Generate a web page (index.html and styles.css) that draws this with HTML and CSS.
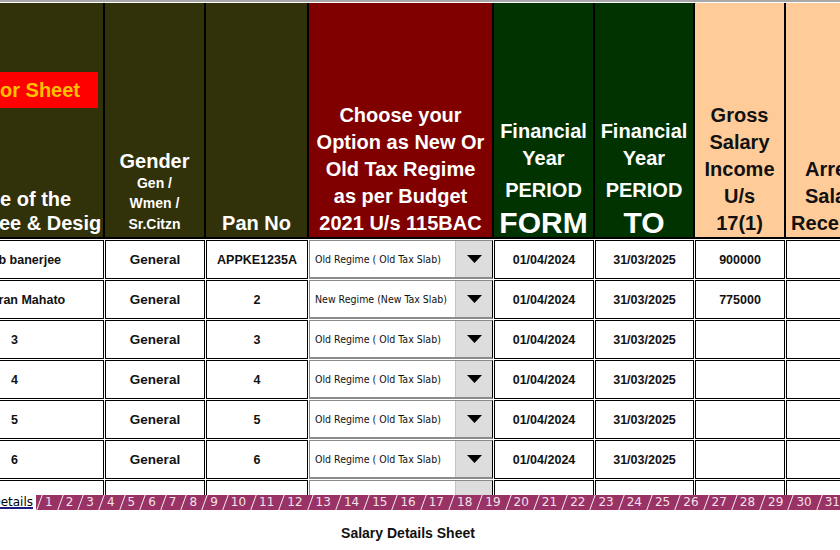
FILE: index.html
```html
<!DOCTYPE html>
<html>
<head>
<meta charset="utf-8">
<title>Salary Details Sheet</title>
<link rel="stylesheet" href="styles.css">
</head>
<body>
<div class="sheet">
  <div class="head">
    <div class="h olive name">
      <div class="banner">Tax Calculator Sheet</div>
      <span>Name of the<br>Employee &amp; Desig</span>
    </div>
    <div class="h olive gender">
      <span class="g-big">Gender</span>
      <span class="g-small">Gen /<br>Wmen /<br>Sr.Citzn</span>
    </div>
    <div class="h olive"><span>Pan No</span></div>
    <div class="h red"><span>Choose your<br>Option as New Or<br>Old Tax Regime<br>as per Budget<br>2021 U/s 115BAC</span></div>
    <div class="h green"><span>Financial<br>Year</span><span class="period">PERIOD</span><span class="ft">FORM</span></div>
    <div class="h green"><span>Financial<br>Year</span><span class="period">PERIOD</span><span class="ft">TO</span></div>
    <div class="h peach"><span>Gross<br>Salary<br>Income<br>U/s<br>17(1)</span></div>
    <div class="h peach"><span>Arrear<br>Salary<br>Received</span></div>
  </div>

  <div class="body">
    <div class="c">Sudeb banerjee</div>
    <div class="c gen">General</div>
    <div class="c">APPKE1235A</div>
    <div class="dd"><span class="dd-text">Old Regime ( Old Tax Slab)</span><span class="dd-btn"><svg width="15" height="8" viewBox="0 0 15 8"><polygon points="0,0 15,0 7.5,8"/></svg></span></div>
    <div class="c">01/04/2024</div>
    <div class="c">31/03/2025</div>
    <div class="c">900000</div>
    <div class="c"></div>

    <div class="c">Kumaran Mahato</div>
    <div class="c gen">General</div>
    <div class="c">2</div>
    <div class="dd"><span class="dd-text">New Regime (New Tax Slab)</span><span class="dd-btn"><svg width="15" height="8" viewBox="0 0 15 8"><polygon points="0,0 15,0 7.5,8"/></svg></span></div>
    <div class="c">01/04/2024</div>
    <div class="c">31/03/2025</div>
    <div class="c">775000</div>
    <div class="c"></div>

    <div class="c">3</div>
    <div class="c gen">General</div>
    <div class="c">3</div>
    <div class="dd"><span class="dd-text">Old Regime ( Old Tax Slab)</span><span class="dd-btn"><svg width="15" height="8" viewBox="0 0 15 8"><polygon points="0,0 15,0 7.5,8"/></svg></span></div>
    <div class="c">01/04/2024</div>
    <div class="c">31/03/2025</div>
    <div class="c"></div>
    <div class="c"></div>

    <div class="c">4</div>
    <div class="c gen">General</div>
    <div class="c">4</div>
    <div class="dd"><span class="dd-text">Old Regime ( Old Tax Slab)</span><span class="dd-btn"><svg width="15" height="8" viewBox="0 0 15 8"><polygon points="0,0 15,0 7.5,8"/></svg></span></div>
    <div class="c">01/04/2024</div>
    <div class="c">31/03/2025</div>
    <div class="c"></div>
    <div class="c"></div>

    <div class="c">5</div>
    <div class="c gen">General</div>
    <div class="c">5</div>
    <div class="dd"><span class="dd-text">Old Regime ( Old Tax Slab)</span><span class="dd-btn"><svg width="15" height="8" viewBox="0 0 15 8"><polygon points="0,0 15,0 7.5,8"/></svg></span></div>
    <div class="c">01/04/2024</div>
    <div class="c">31/03/2025</div>
    <div class="c"></div>
    <div class="c"></div>

    <div class="c">6</div>
    <div class="c gen">General</div>
    <div class="c">6</div>
    <div class="dd"><span class="dd-text">Old Regime ( Old Tax Slab)</span><span class="dd-btn"><svg width="15" height="8" viewBox="0 0 15 8"><polygon points="0,0 15,0 7.5,8"/></svg></span></div>
    <div class="c">01/04/2024</div>
    <div class="c">31/03/2025</div>
    <div class="c"></div>
    <div class="c"></div>

    <div class="c"></div>
    <div class="c"></div>
    <div class="c"></div>
    <div class="dd"><span class="dd-text"></span><span class="dd-btn"></span></div>
    <div class="c"></div>
    <div class="c"></div>
    <div class="c"></div>
    <div class="c"></div>
  </div>
</div>

<div class="tabs">
  <div class="tab-active"><span>Salary Details</span></div>
  <div class="tab">1</div><div class="tab">2</div><div class="tab">3</div><div class="tab">4</div><div class="tab">5</div><div class="tab">6</div><div class="tab">7</div><div class="tab">8</div><div class="tab">9</div><div class="tab">10</div><div class="tab">11</div><div class="tab">12</div><div class="tab">13</div><div class="tab">14</div><div class="tab">15</div><div class="tab">16</div><div class="tab">17</div><div class="tab">18</div><div class="tab">19</div><div class="tab">20</div><div class="tab">21</div><div class="tab">22</div><div class="tab">23</div><div class="tab">24</div><div class="tab">25</div><div class="tab">26</div><div class="tab">27</div><div class="tab">28</div><div class="tab">29</div><div class="tab">30</div><div class="tab">31</div><div class="tab">32</div>
</div>

<div class="caption">Salary Details Sheet</div>
</body>
</html>
```

FILE: styles.css
```css
html, body {
  margin: 0;
  padding: 0;
  background: #fff;
}
body {
  width: 840px;
  height: 550px;
  overflow: hidden;
  font-family: "Liberation Sans", Arial, sans-serif;
}

.sheet {
  width: 840px;
  height: 495px;
  overflow: hidden;
  box-sizing: border-box;
  border-top: 2px solid #a8a8a8;
  padding-top: 1px;
}

.head {
  display: grid;
  grid-template-columns: 180px 101px 103px 185px 101px 100px 91px 100px;
  height: 236px;
  margin-left: -75px;
}

.h {
  position: relative;
  display: flex;
  flex-direction: column;
  justify-content: flex-end;
  align-items: center;
  text-align: center;
  border-right: 2px solid #000;
  border-bottom: 2px solid #000;
  font-weight: bold;
  font-size: 20px;
  line-height: 27px;
  color: #fff;
  white-space: nowrap;
}

.olive { background: #31310a; }
.red { background: #800000; }
.green { background: #003300; }
.peach { background: #ffcc99; color: #111; }

.name {
  line-height: 24px;
  padding-bottom: 2px;
}

.banner {
  position: absolute;
  top: 69px;
  right: 5px;
  height: 36px;
  padding: 0 18px 0 20px;
  background: #ff0000;
  color: #ffc000;
  font-size: 20px;
  line-height: 36px;
}

.gender { padding-bottom: 3px; }
.g-big { font-size: 20px; line-height: 24px; }
.g-small { font-size: 14px; line-height: 20.5px; }

.period { line-height: 36px; }
.ft { font-size: 30px; line-height: 29px; }

.body {
  display: grid;
  grid-template-columns: 179px 100px 102px 184px 100px 99px 90px 100px;
  grid-auto-rows: 39px;
  gap: 1px;
  margin: 1px 0 0 -75px;
}

.c {
  display: flex;
  align-items: center;
  justify-content: center;
  border: 1px solid #000;
  font-weight: bold;
  font-size: 12.5px;
  color: #111;
  white-space: nowrap;
  overflow: hidden;
}

.gen { font-size: 13.5px; }

.dd {
  display: flex;
  align-items: stretch;
  background: #fff;
  border: 1px solid #8a8a8a;
  border-bottom: 2px solid #8c8c8c;
  border-right: 1px solid #000;
}

.dd-text {
  flex: 1;
  display: flex;
  align-items: center;
  padding-left: 5px;
  font-family: "DejaVu Sans Condensed", "DejaVu Sans", sans-serif;
  font-stretch: condensed;
  font-size: 10.5px;
  color: #111;
  white-space: nowrap;
}

.dd-btn {
  width: 36px;
  display: flex;
  align-items: center;
  justify-content: center;
  background: #dddddd;
  border-left: 1px solid #c4c4c4;
}
.dd-btn svg { fill: #000; }

.tabs {
  display: flex;
  height: 15px;
  background: #993366;
  overflow: hidden;
  font-family: "DejaVu Sans", sans-serif;
  font-size: 12px;
  line-height: 15px;
}

.tab-active {
  flex: none;
  width: 36px;
  display: flex;
  justify-content: flex-end;
  overflow: hidden;
  background: #fff;
  color: #000;
}
.tab-active span {
  white-space: nowrap;
  padding-right: 3px;
  text-decoration: underline;
  text-decoration-color: #1a1a80;
  text-decoration-thickness: 2px;
}

.tab {
  flex: none;
  position: relative;
  padding: 0 4px 0 9px;
  color: #f3e2ea;
}
.tab::before {
  content: "";
  position: absolute;
  left: 3px;
  top: 0;
  bottom: 0;
  width: 1px;
  background: #f4eef1;
  transform: skewX(-20deg);
}

.caption {
  margin-top: 15px;
  padding-right: 24px;
  text-align: center;
  font-weight: bold;
  font-size: 14px;
  line-height: 16px;
  color: #111;
}
```
